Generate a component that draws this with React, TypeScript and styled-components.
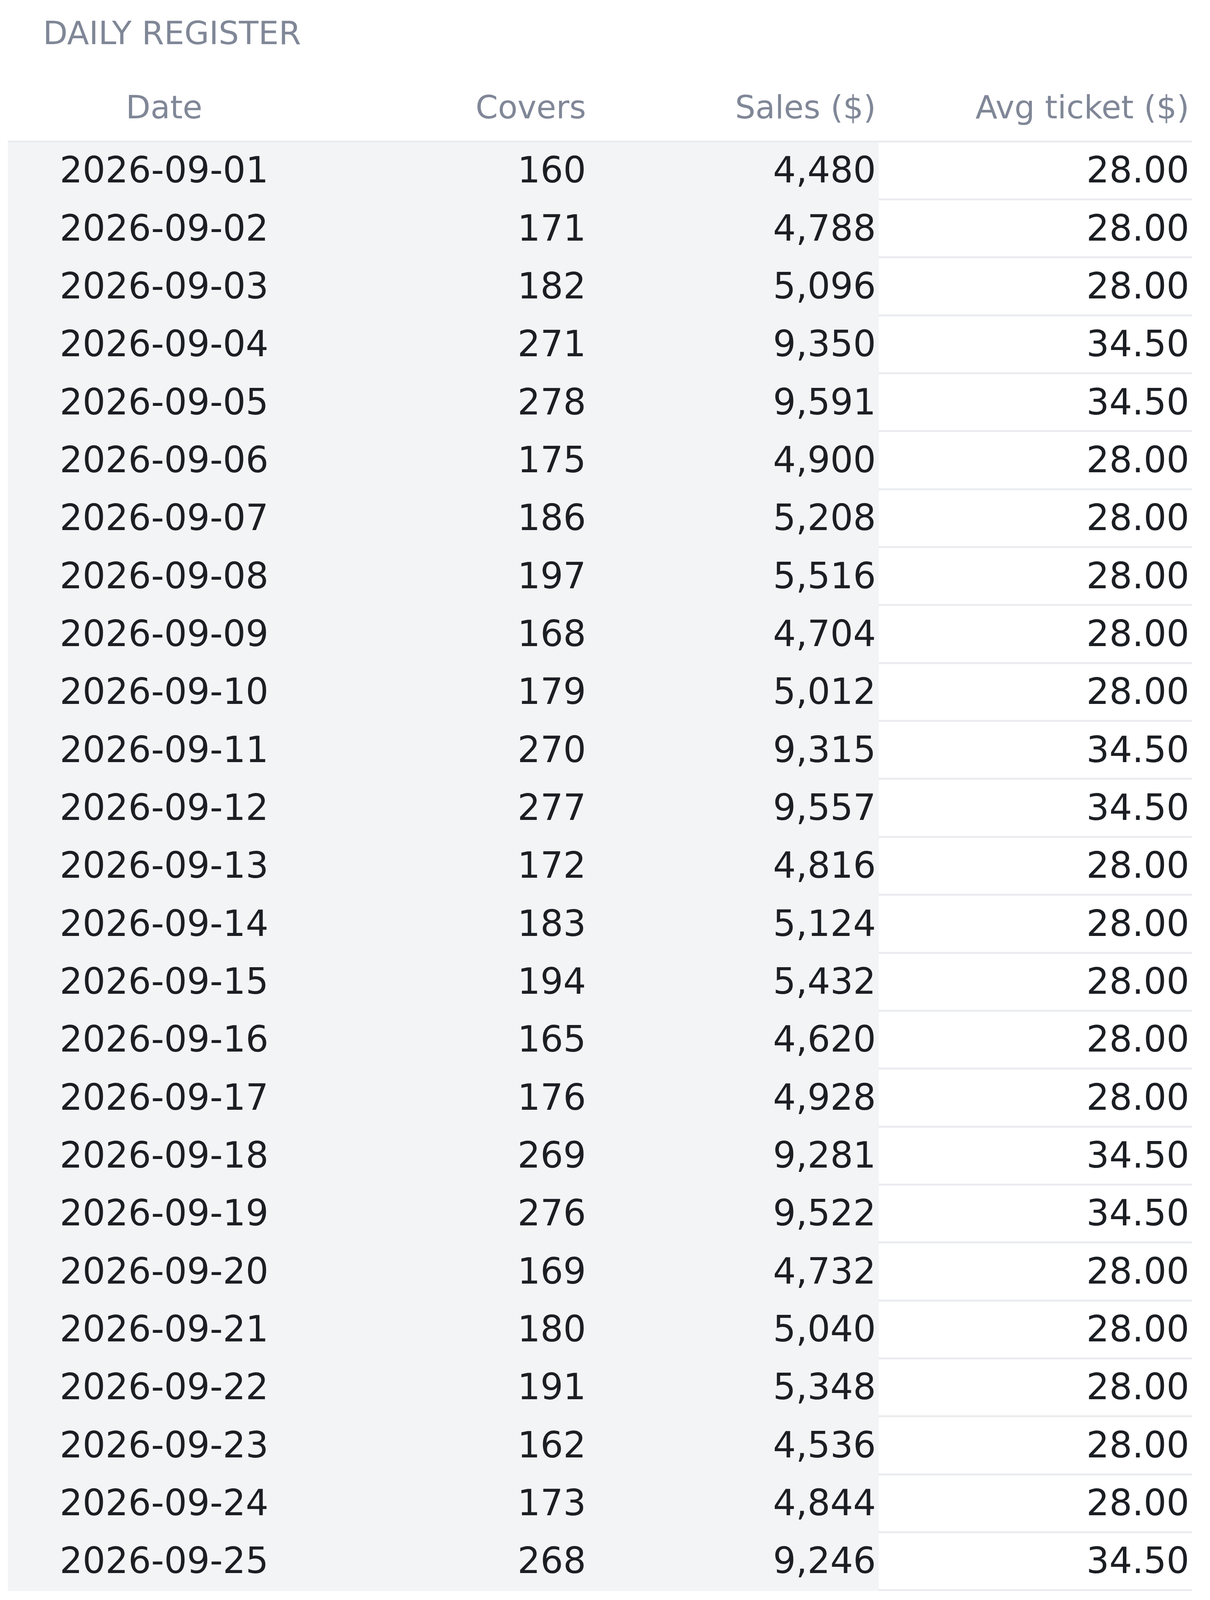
import styled, { createGlobalStyle } from "styled-components";

interface DayRow {
  date: string;
  covers: number;
  sales: number;
  avg: number;
}

const rows: DayRow[] = [
  { date: "2026-09-01", covers: 160, sales: 4480, avg: 28 },
  { date: "2026-09-02", covers: 171, sales: 4788, avg: 28 },
  { date: "2026-09-03", covers: 182, sales: 5096, avg: 28 },
  { date: "2026-09-04", covers: 271, sales: 9350, avg: 34.5 },
  { date: "2026-09-05", covers: 278, sales: 9591, avg: 34.5 },
  { date: "2026-09-06", covers: 175, sales: 4900, avg: 28 },
  { date: "2026-09-07", covers: 186, sales: 5208, avg: 28 },
  { date: "2026-09-08", covers: 197, sales: 5516, avg: 28 },
  { date: "2026-09-09", covers: 168, sales: 4704, avg: 28 },
  { date: "2026-09-10", covers: 179, sales: 5012, avg: 28 },
  { date: "2026-09-11", covers: 270, sales: 9315, avg: 34.5 },
  { date: "2026-09-12", covers: 277, sales: 9557, avg: 34.5 },
  { date: "2026-09-13", covers: 172, sales: 4816, avg: 28 },
  { date: "2026-09-14", covers: 183, sales: 5124, avg: 28 },
  { date: "2026-09-15", covers: 194, sales: 5432, avg: 28 },
  { date: "2026-09-16", covers: 165, sales: 4620, avg: 28 },
  { date: "2026-09-17", covers: 176, sales: 4928, avg: 28 },
  { date: "2026-09-18", covers: 269, sales: 9281, avg: 34.5 },
  { date: "2026-09-19", covers: 276, sales: 9522, avg: 34.5 },
  { date: "2026-09-20", covers: 169, sales: 4732, avg: 28 },
  { date: "2026-09-21", covers: 180, sales: 5040, avg: 28 },
  { date: "2026-09-22", covers: 191, sales: 5348, avg: 28 },
  { date: "2026-09-23", covers: 162, sales: 4536, avg: 28 },
  { date: "2026-09-24", covers: 173, sales: 4844, avg: 28 },
  { date: "2026-09-25", covers: 268, sales: 9246, avg: 34.5 },
];

const GlobalStyle = createGlobalStyle`
  body {
    margin: 0;
    background: #ffffff;
    font-family: "DejaVu Sans", "Noto Sans", sans-serif;
  }
`;

const Page = styled.div`
  padding: 0 0 0 20px;
  width: 3031px;
`;

const Title = styled.h2`
  margin: 0 0 55.7px;
  padding: 36.2px 0 0 90px;
  font-size: 82px;
  line-height: 98.4px;
  font-weight: 400;
  color: #808797;
`;

const Grid = styled.div`
  display: grid;
  grid-template-columns: 800px 687px 742px 802px;
`;

const HeaderRow = styled(Grid)`
  border-bottom: 5.2px solid #eaecef;
`;

const HeadCell = styled.div<{ $align: "center" | "right" }>`
  padding: 35.5px 7px;
  font-size: 82px;
  line-height: 98.4px;
  color: #808797;
  text-align: ${(p) => p.$align};
  white-space: nowrap;
`;

const Cell = styled.div<{ $align: "center" | "right"; $shaded?: boolean }>`
  height: 143.35px;
  display: flex;
  align-items: center;
  justify-content: ${(p) => (p.$align === "center" ? "center" : "flex-end")};
  padding: 0 7px;
  font-size: 92px;
  line-height: 110.4px;
  color: #1b1e23;
  background: ${(p) => (p.$shaded ? "#f3f4f6" : "#ffffff")};
  border-bottom: 5.2px solid ${(p) => (p.$shaded ? "transparent" : "#eaecef")};
  white-space: nowrap;
`;

const App = () => {
  return (
    <>
      <GlobalStyle />
      <Page>
        <Title>DAILY REGISTER</Title>
        <HeaderRow>
          <HeadCell $align="center">Date</HeadCell>
          <HeadCell $align="right">Covers</HeadCell>
          <HeadCell $align="right">Sales ($)</HeadCell>
          <HeadCell $align="right">Avg ticket ($)</HeadCell>
        </HeaderRow>
        {rows.map((row) => (
          <Grid key={row.date}>
            <Cell $align="center" $shaded>
              {row.date}
            </Cell>
            <Cell $align="right" $shaded>
              {row.covers}
            </Cell>
            <Cell $align="right" $shaded>
              {row.sales.toLocaleString("en-US")}
            </Cell>
            <Cell $align="right">{row.avg.toFixed(2)}</Cell>
          </Grid>
        ))}
      </Page>
    </>
  );
};

export default App;
